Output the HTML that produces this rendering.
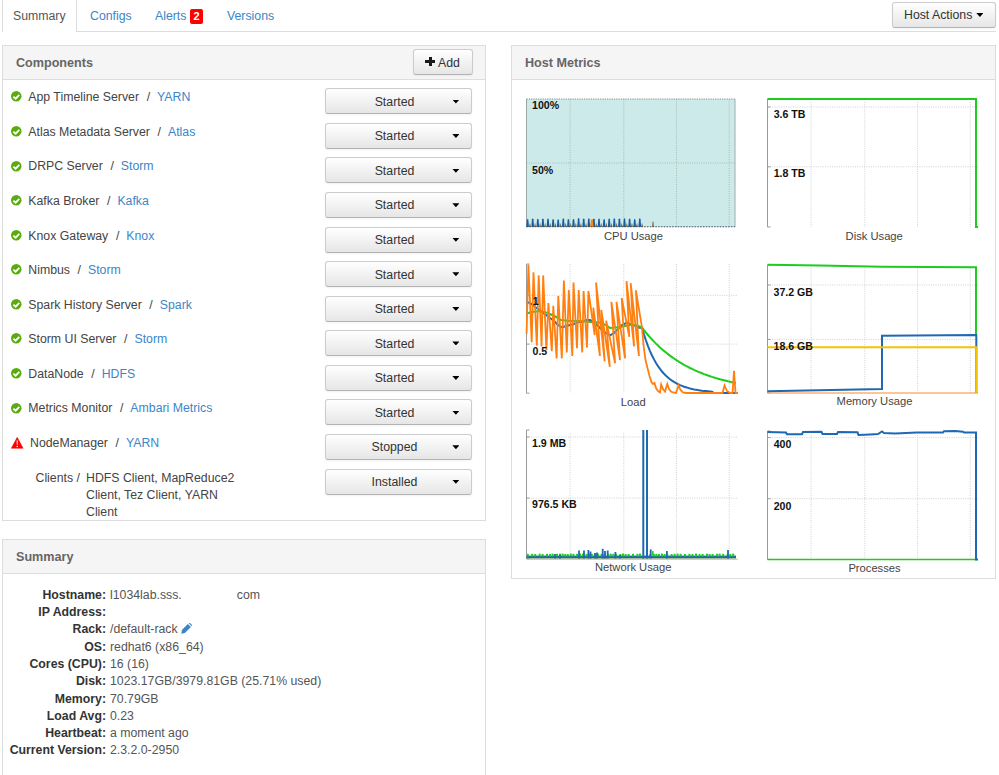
<!DOCTYPE html>
<html><head><meta charset="utf-8">
<style>
html,body{margin:0;padding:0;background:#fff;width:999px;height:775px;overflow:hidden;position:relative;font-family:"Liberation Sans",sans-serif;font-size:12.3px;color:#333}
.a{position:absolute;white-space:nowrap}
.lnk{color:#3a86c8}
.tabtxt{font-size:12.3px;line-height:14px}
.panel{position:absolute;border:1px solid #ddd;background:#fff;box-sizing:border-box}
.ph{position:absolute;left:0;right:0;top:0;height:33px;background:#f5f5f5;border-bottom:1px solid #ddd}
.pht{position:absolute;font-weight:bold;color:#666;font-size:12.6px;line-height:14px}
.btn{position:absolute;box-sizing:border-box;border:1px solid #ccc;border-bottom-color:#b3b3b3;border-radius:3px;background:linear-gradient(#fff,#e6e6e6);box-shadow:0 1px 2px rgba(0,0,0,.05)}
.caret{position:absolute;width:7.2px;height:4px;background:#000;clip-path:polygon(0 0,100% 0,50% 100%);margin-left:0.3px}
.comp{position:absolute;font-size:12.3px;line-height:14px;color:#444}
.sl{position:absolute;text-align:right;font-weight:bold;width:104px;left:2px;font-size:12.3px;line-height:14px;color:#333}
.sv{position:absolute;left:110px;font-size:12.3px;line-height:14px;color:#555}
</style></head><body>

<!-- Tabs -->
<div class="a" style="left:2px;top:0;width:1px;height:32px;background:#ddd"></div>
<div class="a" style="left:76px;top:0;width:1px;height:32px;background:#ddd"></div>
<div class="a" style="left:76px;top:31px;width:920px;height:1px;background:#ddd"></div>
<div class="a tabtxt" style="left:13px;top:9px;color:#555">Summary</div>
<div class="a tabtxt lnk" style="left:90px;top:9px">Configs</div>
<div class="a tabtxt lnk" style="left:155px;top:9px">Alerts</div>
<div class="a" style="left:190px;top:9px;width:13px;height:15px;background:#f00;border-radius:2px;color:#fff;font-weight:bold;font-size:11px;line-height:15px;text-align:center">2</div>
<div class="a tabtxt lnk" style="left:227px;top:9px">Versions</div>

<!-- Host Actions -->
<div class="btn" style="left:892px;top:2px;width:104px;height:26px"></div>
<div class="a tabtxt" style="left:904px;top:8px">Host Actions</div>
<div class="caret" style="left:976px;top:13px"></div>

<!-- Components panel -->
<div class="panel" style="left:2px;top:45px;width:484px;height:476px">
  <div class="ph"></div>
</div>
<div class="a pht" style="left:16px;top:55.6px">Components</div>
<div class="btn" style="left:413px;top:49px;width:60px;height:26px"></div>
<div class="a" style="left:425.2px;top:60.2px;width:9.6px;height:2.7px;background:#1a1a1a"></div><div class="a" style="left:428.5px;top:56.9px;width:3px;height:9.3px;background:#1a1a1a"></div>
<div class="a tabtxt" style="left:438px;top:55.8px">Add</div>

<svg class="a" style="left:10.65px;top:91.45px" width="11" height="11" viewBox="0 0 11 11"><circle cx="5.25" cy="5.25" r="5.25" fill="#5aac0c"/><path d="M2.4 5.6 L4.6 7.7 L8.3 3.9" stroke="#fff" stroke-width="1.8" fill="none" stroke-linecap="butt"/></svg>
<div class="a comp" style="left:28.3px;top:90.30px">App Timeline Server<span style="padding:0 7px 0 7.6px">/</span><span class="lnk">YARN</span></div>
<div class="btn" style="left:325px;top:88.30px;width:147px;height:26px"></div>
<div class="a tabtxt" style="left:325px;width:139px;text-align:center;top:94.70px">Started</div>
<div class="caret" style="left:452px;top:99.50px"></div>
<svg class="a" style="left:10.65px;top:126.02px" width="11" height="11" viewBox="0 0 11 11"><circle cx="5.25" cy="5.25" r="5.25" fill="#5aac0c"/><path d="M2.4 5.6 L4.6 7.7 L8.3 3.9" stroke="#fff" stroke-width="1.8" fill="none" stroke-linecap="butt"/></svg>
<div class="a comp" style="left:28.3px;top:124.87px">Atlas Metadata Server<span style="padding:0 7px 0 7.6px">/</span><span class="lnk">Atlas</span></div>
<div class="btn" style="left:325px;top:122.87px;width:147px;height:26px"></div>
<div class="a tabtxt" style="left:325px;width:139px;text-align:center;top:129.27px">Started</div>
<div class="caret" style="left:452px;top:134.07px"></div>
<svg class="a" style="left:10.65px;top:160.59px" width="11" height="11" viewBox="0 0 11 11"><circle cx="5.25" cy="5.25" r="5.25" fill="#5aac0c"/><path d="M2.4 5.6 L4.6 7.7 L8.3 3.9" stroke="#fff" stroke-width="1.8" fill="none" stroke-linecap="butt"/></svg>
<div class="a comp" style="left:28.3px;top:159.44px">DRPC Server<span style="padding:0 7px 0 7.6px">/</span><span class="lnk">Storm</span></div>
<div class="btn" style="left:325px;top:157.44px;width:147px;height:26px"></div>
<div class="a tabtxt" style="left:325px;width:139px;text-align:center;top:163.84px">Started</div>
<div class="caret" style="left:452px;top:168.64px"></div>
<svg class="a" style="left:10.65px;top:195.16px" width="11" height="11" viewBox="0 0 11 11"><circle cx="5.25" cy="5.25" r="5.25" fill="#5aac0c"/><path d="M2.4 5.6 L4.6 7.7 L8.3 3.9" stroke="#fff" stroke-width="1.8" fill="none" stroke-linecap="butt"/></svg>
<div class="a comp" style="left:28.3px;top:194.01px">Kafka Broker<span style="padding:0 7px 0 7.6px">/</span><span class="lnk">Kafka</span></div>
<div class="btn" style="left:325px;top:192.01px;width:147px;height:26px"></div>
<div class="a tabtxt" style="left:325px;width:139px;text-align:center;top:198.41px">Started</div>
<div class="caret" style="left:452px;top:203.21px"></div>
<svg class="a" style="left:10.65px;top:229.73px" width="11" height="11" viewBox="0 0 11 11"><circle cx="5.25" cy="5.25" r="5.25" fill="#5aac0c"/><path d="M2.4 5.6 L4.6 7.7 L8.3 3.9" stroke="#fff" stroke-width="1.8" fill="none" stroke-linecap="butt"/></svg>
<div class="a comp" style="left:28.3px;top:228.58px">Knox Gateway<span style="padding:0 7px 0 7.6px">/</span><span class="lnk">Knox</span></div>
<div class="btn" style="left:325px;top:226.58px;width:147px;height:26px"></div>
<div class="a tabtxt" style="left:325px;width:139px;text-align:center;top:232.98px">Started</div>
<div class="caret" style="left:452px;top:237.78px"></div>
<svg class="a" style="left:10.65px;top:264.3px" width="11" height="11" viewBox="0 0 11 11"><circle cx="5.25" cy="5.25" r="5.25" fill="#5aac0c"/><path d="M2.4 5.6 L4.6 7.7 L8.3 3.9" stroke="#fff" stroke-width="1.8" fill="none" stroke-linecap="butt"/></svg>
<div class="a comp" style="left:28.3px;top:263.15px">Nimbus<span style="padding:0 7px 0 7.6px">/</span><span class="lnk">Storm</span></div>
<div class="btn" style="left:325px;top:261.15px;width:147px;height:26px"></div>
<div class="a tabtxt" style="left:325px;width:139px;text-align:center;top:267.55px">Started</div>
<div class="caret" style="left:452px;top:272.35px"></div>
<svg class="a" style="left:10.65px;top:298.87px" width="11" height="11" viewBox="0 0 11 11"><circle cx="5.25" cy="5.25" r="5.25" fill="#5aac0c"/><path d="M2.4 5.6 L4.6 7.7 L8.3 3.9" stroke="#fff" stroke-width="1.8" fill="none" stroke-linecap="butt"/></svg>
<div class="a comp" style="left:28.3px;top:297.72px">Spark History Server<span style="padding:0 7px 0 7.6px">/</span><span class="lnk">Spark</span></div>
<div class="btn" style="left:325px;top:295.72px;width:147px;height:26px"></div>
<div class="a tabtxt" style="left:325px;width:139px;text-align:center;top:302.12px">Started</div>
<div class="caret" style="left:452px;top:306.92px"></div>
<svg class="a" style="left:10.65px;top:333.44px" width="11" height="11" viewBox="0 0 11 11"><circle cx="5.25" cy="5.25" r="5.25" fill="#5aac0c"/><path d="M2.4 5.6 L4.6 7.7 L8.3 3.9" stroke="#fff" stroke-width="1.8" fill="none" stroke-linecap="butt"/></svg>
<div class="a comp" style="left:28.3px;top:332.29px">Storm UI Server<span style="padding:0 7px 0 7.6px">/</span><span class="lnk">Storm</span></div>
<div class="btn" style="left:325px;top:330.29px;width:147px;height:26px"></div>
<div class="a tabtxt" style="left:325px;width:139px;text-align:center;top:336.69px">Started</div>
<div class="caret" style="left:452px;top:341.49px"></div>
<svg class="a" style="left:10.65px;top:368.01px" width="11" height="11" viewBox="0 0 11 11"><circle cx="5.25" cy="5.25" r="5.25" fill="#5aac0c"/><path d="M2.4 5.6 L4.6 7.7 L8.3 3.9" stroke="#fff" stroke-width="1.8" fill="none" stroke-linecap="butt"/></svg>
<div class="a comp" style="left:28.3px;top:366.86px">DataNode<span style="padding:0 7px 0 7.6px">/</span><span class="lnk">HDFS</span></div>
<div class="btn" style="left:325px;top:364.86px;width:147px;height:26px"></div>
<div class="a tabtxt" style="left:325px;width:139px;text-align:center;top:371.26px">Started</div>
<div class="caret" style="left:452px;top:376.06px"></div>
<svg class="a" style="left:10.65px;top:402.58px" width="11" height="11" viewBox="0 0 11 11"><circle cx="5.25" cy="5.25" r="5.25" fill="#5aac0c"/><path d="M2.4 5.6 L4.6 7.7 L8.3 3.9" stroke="#fff" stroke-width="1.8" fill="none" stroke-linecap="butt"/></svg>
<div class="a comp" style="left:28.3px;top:401.43px">Metrics Monitor<span style="padding:0 7px 0 7.6px">/</span><span class="lnk">Ambari Metrics</span></div>
<div class="btn" style="left:325px;top:399.43px;width:147px;height:26px"></div>
<div class="a tabtxt" style="left:325px;width:139px;text-align:center;top:405.83px">Started</div>
<div class="caret" style="left:452px;top:410.63px"></div>
<svg class="a" style="left:10.6px;top:436.5px" width="13" height="12" viewBox="0 0 13 12"><path d="M6.2 0.3 L12.1 11.3 L0.3 11.3 Z" fill="#f00" stroke="#f00" stroke-width="0.5" stroke-linejoin="round"/><path d="M5.6 3.6 L6.8 3.6 L6.5 8.2 L5.9 8.2 Z" fill="#fff"/><rect x="5.6" y="9" width="1.2" height="1.1" fill="#fff"/></svg>
<div class="a comp" style="left:30px;top:436.00px">NodeManager<span style="padding:0 7px 0 7.6px">/</span><span class="lnk">YARN</span></div>
<div class="btn" style="left:325px;top:434.00px;width:147px;height:26px"></div>
<div class="a tabtxt" style="left:325px;width:139px;text-align:center;top:440.40px">Stopped</div>
<div class="caret" style="left:452px;top:445.20px"></div>
<div class="a comp" style="left:35.5px;top:470.57px">Clients /</div>
<div class="a comp" style="left:86px;top:471.27px;line-height:17.3px;white-space:normal;width:160px;margin-top:-1.6px">HDFS Client, MapReduce2 Client, Tez Client, YARN Client</div>
<div class="btn" style="left:325px;top:468.57px;width:147px;height:26px"></div>
<div class="a tabtxt" style="left:325px;width:139px;text-align:center;top:474.97px">Installed</div>
<div class="caret" style="left:452px;top:479.77px"></div>

<!-- Summary panel -->
<div class="panel" style="left:2px;top:539px;width:484px;height:260px">
  <div class="ph"></div>
</div>
<div class="a pht" style="left:16px;top:549.7px">Summary</div>
<div class="a sl" style="top:587.70px">Hostname:</div>
<div class="a sv" style="top:587.70px">l1034lab.sss.<span style='display:inline-block;width:55px'></span>com</div>
<div class="a sl" style="top:605.00px">IP Address:</div>
<div class="a sl" style="top:622.30px">Rack:</div>
<div class="a sv" style="top:622.30px">/default-rack <svg style="vertical-align:-1px;margin-left:-0.5px" width="11" height="11" viewBox="0 0 11 11"><path d="M0.3 10.7 L0.9 7.1 L6.9 1.1 L9.9 4.1 L3.9 10.1 Z" fill="#3a86c8"/><path d="M7.7 0.3 L8.5 -0.5 L11.5 2.5 L10.7 3.3 Z" fill="#3a86c8"/></svg></div>
<div class="a sl" style="top:639.60px">OS:</div>
<div class="a sv" style="top:639.60px">redhat6 (x86_64)</div>
<div class="a sl" style="top:656.90px">Cores (CPU):</div>
<div class="a sv" style="top:656.90px">16 (16)</div>
<div class="a sl" style="top:674.20px">Disk:</div>
<div class="a sv" style="top:674.20px">1023.17GB/3979.81GB (25.71% used)</div>
<div class="a sl" style="top:691.50px">Memory:</div>
<div class="a sv" style="top:691.50px">70.79GB</div>
<div class="a sl" style="top:708.80px">Load Avg:</div>
<div class="a sv" style="top:708.80px">0.23</div>
<div class="a sl" style="top:726.10px">Heartbeat:</div>
<div class="a sv" style="top:726.10px">a moment ago</div>
<div class="a sl" style="top:743.40px">Current Version:</div>
<div class="a sv" style="top:743.40px">2.3.2.0-2950</div>

<!-- Host Metrics panel -->
<div class="panel" style="left:511px;top:45px;width:485px;height:534px">
  <div class="ph"></div>
</div>
<div class="a pht" style="left:525px;top:55.6px">Host Metrics</div>
<svg class="a" style="left:0;top:0" width="999" height="775" viewBox="0 0 999 775"><rect x="526.5" y="99" width="208.5" height="128" fill="#cdeaea"/>
<line x1="570.1" y1="99" x2="570.1" y2="227" stroke="#aab8b8" stroke-width="1" stroke-dasharray="1 1.3"/>
<line x1="623.8" y1="99" x2="623.8" y2="227" stroke="#aab8b8" stroke-width="1" stroke-dasharray="1 1.3"/>
<line x1="676.5" y1="99" x2="676.5" y2="227" stroke="#aab8b8" stroke-width="1" stroke-dasharray="1 1.3"/>
<line x1="729.2" y1="99" x2="729.2" y2="227" stroke="#aab8b8" stroke-width="1" stroke-dasharray="1 1.3"/>
<line x1="526.5" y1="163.0" x2="735" y2="163.0" stroke="#aab8b8" stroke-width="1" stroke-dasharray="1 1.3"/>
<line x1="526.5" y1="99" x2="735" y2="99" stroke="#8a9595" stroke-width="1" stroke-dasharray="1.3 1"/>
<line x1="735" y1="99" x2="735" y2="227" stroke="#a0abab" stroke-width="1"/>
<line x1="526.5" y1="99" x2="526.5" y2="227" stroke="#9aa5a5" stroke-width="1"/>
<path d="M526.25 227 L526.85 219.6 Q527.6 218.2 528.35 219.6 L528.95 227 Z" fill="#1b5e9e"/>
<path d="M528.8 227 L529.9 222.8 L531.0 227 Z" fill="#5e4c30" opacity="0.75"/>
<path d="M531.35 227 L531.95 219.2 Q532.7 217.8 533.45 219.2 L534.05 227 Z" fill="#1b5e9e"/>
<path d="M533.9 227 L535.0 222.8 L536.1 227 Z" fill="#5e4c30" opacity="0.75"/>
<path d="M536.45 227 L537.05 219.5 Q537.8 218.1 538.55 219.5 L539.15 227 Z" fill="#1b5e9e"/>
<path d="M539.0 227 L540.1 222.8 L541.2 227 Z" fill="#5e4c30" opacity="0.75"/>
<path d="M541.55 227 L542.15 219.2 Q542.9 217.8 543.65 219.2 L544.25 227 Z" fill="#1b5e9e"/>
<path d="M544.1 227 L545.2 222.8 L546.3 227 Z" fill="#5e4c30" opacity="0.75"/>
<path d="M546.65 227 L547.25 219.1 Q548.0 217.7 548.75 219.1 L549.35 227 Z" fill="#1b5e9e"/>
<path d="M549.2 227 L550.3 222.8 L551.4 227 Z" fill="#5e4c30" opacity="0.75"/>
<path d="M551.75 227 L552.35 219.8 Q553.1 218.4 553.85 219.8 L554.45 227 Z" fill="#1b5e9e"/>
<path d="M554.3 227 L555.4 222.8 L556.5 227 Z" fill="#5e4c30" opacity="0.75"/>
<path d="M556.85 227 L557.45 219.9 Q558.2 218.5 558.95 219.9 L559.55 227 Z" fill="#1b5e9e"/>
<path d="M559.4 227 L560.5 222.8 L561.6 227 Z" fill="#5e4c30" opacity="0.75"/>
<path d="M561.95 227 L562.55 218.9 Q563.3 217.5 564.05 218.9 L564.65 227 Z" fill="#1b5e9e"/>
<path d="M564.5 227 L565.6 222.8 L566.7 227 Z" fill="#5e4c30" opacity="0.75"/>
<path d="M567.05 227 L567.65 219.6 Q568.4 218.2 569.15 219.6 L569.75 227 Z" fill="#1b5e9e"/>
<path d="M569.6 227 L570.7 222.8 L571.8 227 Z" fill="#5e4c30" opacity="0.75"/>
<path d="M572.15 227 L572.75 219.6 Q573.5 218.2 574.25 219.6 L574.85 227 Z" fill="#1b5e9e"/>
<path d="M574.7 227 L575.8 222.8 L576.9 227 Z" fill="#5e4c30" opacity="0.75"/>
<path d="M577.25 227 L577.85 218.7 Q578.6 217.3 579.35 218.7 L579.95 227 Z" fill="#1b5e9e"/>
<path d="M579.8 227 L580.9 222.8 L582.0 227 Z" fill="#5e4c30" opacity="0.75"/>
<path d="M582.35 227 L582.95 219.3 Q583.7 217.9 584.45 219.3 L585.05 227 Z" fill="#1b5e9e"/>
<path d="M584.9 227 L586.0 222.8 L587.1 227 Z" fill="#5e4c30" opacity="0.75"/>
<path d="M587.45 227 L588.05 218.9 Q588.8 217.5 589.55 218.9 L590.15 227 Z" fill="#1b5e9e"/>
<path d="M590.0 227 L591.1 222.8 L592.2 227 Z" fill="#5e4c30" opacity="0.75"/>
<path d="M592.55 227 L593.15 219.3 Q593.9 217.9 594.65 219.3 L595.25 227 Z" fill="#1b5e9e"/>
<path d="M595.1 227 L596.2 222.8 L597.3 227 Z" fill="#5e4c30" opacity="0.75"/>
<path d="M597.65 227 L598.25 219.1 Q599.0 217.7 599.75 219.1 L600.35 227 Z" fill="#1b5e9e"/>
<path d="M600.2 227 L601.3 222.8 L602.4 227 Z" fill="#5e4c30" opacity="0.75"/>
<path d="M602.75 227 L603.35 219.7 Q604.1 218.3 604.85 219.7 L605.45 227 Z" fill="#1b5e9e"/>
<path d="M605.3 227 L606.4 222.8 L607.5 227 Z" fill="#5e4c30" opacity="0.75"/>
<path d="M607.85 227 L608.45 219.1 Q609.2 217.7 609.95 219.1 L610.55 227 Z" fill="#1b5e9e"/>
<path d="M610.4 227 L611.5 222.8 L612.6 227 Z" fill="#5e4c30" opacity="0.75"/>
<path d="M612.95 227 L613.55 218.9 Q614.3 217.5 615.05 218.9 L615.65 227 Z" fill="#1b5e9e"/>
<path d="M615.5 227 L616.6 222.8 L617.7 227 Z" fill="#5e4c30" opacity="0.75"/>
<path d="M618.05 227 L618.65 219.3 Q619.4 217.9 620.15 219.3 L620.75 227 Z" fill="#1b5e9e"/>
<path d="M620.6 227 L621.7 222.8 L622.8 227 Z" fill="#5e4c30" opacity="0.75"/>
<path d="M623.15 227 L623.75 219.0 Q624.5 217.6 625.25 219.0 L625.85 227 Z" fill="#1b5e9e"/>
<path d="M625.7 227 L626.8 222.8 L627.9 227 Z" fill="#5e4c30" opacity="0.75"/>
<path d="M628.25 227 L628.85 219.1 Q629.6 217.7 630.35 219.1 L630.95 227 Z" fill="#1b5e9e"/>
<path d="M630.8 227 L631.9 222.8 L633.0 227 Z" fill="#5e4c30" opacity="0.75"/>
<path d="M633.35 227 L633.95 219.8 Q634.7 218.4 635.45 219.8 L636.05 227 Z" fill="#1b5e9e"/>
<path d="M635.9 227 L637.0 222.8 L638.1 227 Z" fill="#5e4c30" opacity="0.75"/>
<path d="M638.45 227 L639.05 219.0 Q639.8 217.6 640.55 219.0 L641.15 227 Z" fill="#1b5e9e"/>
<path d="M641.0 227 L642.1 222.8 L643.2 227 Z" fill="#5e4c30" opacity="0.75"/>
<path d="M590.3 227 L590.9 219.5 L592.9 219.5 L593.5 227 Z" fill="#ff8616"/>
<path d="M652.2 227 L652.6 221.5 L653.4 221.5 L653.8 227 Z" fill="#7a5a30"/>
<line x1="526.5" y1="226.7" x2="735" y2="226.7" stroke="#4a5560" stroke-width="1.1" stroke-dasharray="1.6 1.2"/>
<text x="532" y="109" font-family="Liberation Sans" font-weight="bold" font-size="10.6" fill="#111">100%</text>
<text x="532" y="173.5" font-family="Liberation Sans" font-weight="bold" font-size="10.6" fill="#111">50%</text>
<text x="633.5" y="239" text-anchor="middle" font-family="Liberation Sans" font-size="11.2" fill="#444" dy="0.7">CPU Usage</text>
<line x1="811.1" y1="102" x2="811.1" y2="227" stroke="#d0d0d0" stroke-width="1" stroke-dasharray="1 1.3"/>
<line x1="864.8" y1="102" x2="864.8" y2="227" stroke="#d0d0d0" stroke-width="1" stroke-dasharray="1 1.3"/>
<line x1="917.5" y1="102" x2="917.5" y2="227" stroke="#d0d0d0" stroke-width="1" stroke-dasharray="1 1.3"/>
<line x1="970.2" y1="102" x2="970.2" y2="227" stroke="#d0d0d0" stroke-width="1" stroke-dasharray="1 1.3"/>
<line x1="767.5" y1="107.0" x2="978" y2="107.0" stroke="#d0d0d0" stroke-width="1" stroke-dasharray="1 1.3"/>
<line x1="767.5" y1="166.8" x2="978" y2="166.8" stroke="#d0d0d0" stroke-width="1" stroke-dasharray="1 1.3"/>
<line x1="767.5" y1="99" x2="767.5" y2="227" stroke="#9a9a9a" stroke-width="1"/>
<line x1="767.5" y1="99.0" x2="770.5" y2="99.0" stroke="#9a9a9a" stroke-width="1"/>
<line x1="767.5" y1="107.0" x2="770.5" y2="107.0" stroke="#9a9a9a" stroke-width="1"/>
<line x1="767.5" y1="166.8" x2="770.5" y2="166.8" stroke="#9a9a9a" stroke-width="1"/>
<line x1="767.5" y1="227.0" x2="770.5" y2="227.0" stroke="#9a9a9a" stroke-width="1"/>
<polyline points="767.5,99 976,99 976,227 978,227" fill="none" stroke="#1ecc1e" stroke-width="2"/>
<text x="773.7" y="117.7" font-family="Liberation Sans" font-weight="bold" font-size="10.6" fill="#111">3.6 TB</text>
<text x="773.7" y="177" font-family="Liberation Sans" font-weight="bold" font-size="10.6" fill="#111">1.8 TB</text>
<text x="874.2" y="239.1" text-anchor="middle" font-family="Liberation Sans" font-size="11.2" fill="#444" dy="0.7">Disk Usage</text>
<line x1="570.1" y1="264" x2="570.1" y2="393.2" stroke="#d0d0d0" stroke-width="1" stroke-dasharray="1 1.3"/>
<line x1="623.8" y1="264" x2="623.8" y2="393.2" stroke="#d0d0d0" stroke-width="1" stroke-dasharray="1 1.3"/>
<line x1="676.5" y1="264" x2="676.5" y2="393.2" stroke="#d0d0d0" stroke-width="1" stroke-dasharray="1 1.3"/>
<line x1="729.2" y1="264" x2="729.2" y2="393.2" stroke="#d0d0d0" stroke-width="1" stroke-dasharray="1 1.3"/>
<line x1="526.5" y1="295.3" x2="738" y2="295.3" stroke="#d0d0d0" stroke-width="1" stroke-dasharray="1 1.3"/>
<line x1="526.5" y1="344.1" x2="738" y2="344.1" stroke="#d0d0d0" stroke-width="1" stroke-dasharray="1 1.3"/>
<line x1="526.5" y1="264" x2="526.5" y2="393.2" stroke="#9a9a9a" stroke-width="1"/>
<line x1="526.5" y1="264.0" x2="529.5" y2="264.0" stroke="#9a9a9a" stroke-width="1"/>
<line x1="526.5" y1="295.3" x2="529.5" y2="295.3" stroke="#9a9a9a" stroke-width="1"/>
<line x1="526.5" y1="344.1" x2="529.5" y2="344.1" stroke="#9a9a9a" stroke-width="1"/>
<line x1="526.5" y1="393.2" x2="529.5" y2="393.2" stroke="#9a9a9a" stroke-width="1"/>
<polyline points="526.5,302.0 530.0,303.0 534.0,306.0 538.0,309.0 542.0,312.0 546.0,315.0 550.0,318.0 554.0,321.0 558.0,325.0 562.0,327.5 566.0,326.0 570.0,325.0 574.0,324.0 578.0,322.0 582.0,322.0 586.0,320.0 590.0,320.0 594.0,322.0 598.0,326.0 602.0,330.0 606.0,333.0 610.0,335.4 614.0,333.0 618.0,329.0 622.0,325.0 627.0,322.5 632.0,325.0 636.0,326.0 639.0,327.7 642.0,327.6 644.0,334.5 646.0,340.6 648.0,346.1 650.0,351.1 652.0,355.5 654.0,359.4 656.0,363.0 658.0,366.1 660.0,368.9 662.0,371.5 664.0,373.7 666.0,375.8 668.0,377.6 670.0,379.2 672.0,380.6 674.0,381.9 676.0,383.1 678.0,384.1 680.0,385.1 682.0,385.9 684.0,386.7 686.0,387.3 688.0,387.9 690.0,388.5 692.0,388.9 694.0,389.4 696.0,389.7 698.0,390.1 700.0,390.4 702.0,390.7 704.0,390.9 706.0,391.1 708.0,391.3 710.0,391.5 712.0,391.7 714.0,393.0 738.0,393.0" fill="none" stroke="#1f69b4" stroke-width="2"/>
<polyline points="526.5,313.5 532.0,312.0 540.0,311.0 548.0,313.0 556.0,317.0 561.0,320.0 570.0,321.0 580.0,321.0 590.0,322.0 600.0,322.5 606.0,325.0 610.0,328.0 620.0,327.0 630.0,325.0 636.0,325.0 642.0,327.6 644.0,330.2 646.0,332.6 648.0,335.0 650.0,337.3 652.0,339.5 654.0,341.6 656.0,343.6 658.0,345.5 660.0,347.4 662.0,349.2 664.0,350.9 666.0,352.5 668.0,354.1 670.0,355.6 672.0,357.1 674.0,358.5 676.0,359.9 678.0,361.2 680.0,362.4 682.0,363.6 684.0,364.8 686.0,365.9 688.0,366.9 690.0,368.0 692.0,368.9 694.0,369.9 696.0,370.8 698.0,371.7 700.0,372.5 702.0,373.3 704.0,374.1 706.0,374.8 708.0,375.5 710.0,376.2 712.0,376.9 714.0,377.5 716.0,378.1 718.0,378.7 720.0,379.3 722.0,379.8 724.0,380.3 726.0,380.8 728.0,381.3 730.0,381.7 732.0,382.2 734.0,382.6 736.0,383.0" fill="none" stroke="#1ecc1e" stroke-width="2"/>
<polyline points="526.6,333.8 528.4,264.5 531.7,342.2 533.5,272.2 536.8,345.8 538.7,275.4 541.6,346.4 543.2,275.4 546.4,350.0 548.4,303.0 551.8,351.2 553.3,305.7 556.6,358.4 558.3,296.0 561.8,358.4 563.9,280.6 566.8,352.4 568.8,290.0 572.3,356.0 573.5,282.5 577.0,348.2 578.7,290.0 582.2,352.4 583.6,291.0 587.0,347.6 588.4,291.0 594.7,335.0 593.3,307.7 599.9,356.0 596.1,282.5 604.7,361.4 601.3,310.0 609.8,366.8 606.2,320.6 615.1,363.2 611.4,301.9 620.0,360.2 616.5,301.9 625.1,358.4 621.7,298.0 629.3,336.8 626.5,281.2 634.1,346.4 630.7,283.2 638.9,356.0 635.9,290.3 642.0,327.6 643.5,345.0 645.5,360.0 647.5,368.0 649.5,376.0 651.5,382.0 653.0,384.0 654.5,383.0 656.0,388.0 658.0,391.0 660.0,392.5 661.2,384.5 663.0,389.0 665.0,391.5 667.3,384.0 669.0,389.0 671.0,391.5 673.0,392.5 676.0,393.0 678.6,385.4 680.5,390.0 683.0,392.5 686.0,393.0 722.5,393.0 724.5,385.4 727.0,391.0 730.0,393.0 732.5,393.0 734.0,370.7 735.5,393.0 738.0,393.0" fill="none" stroke="#ff8010" stroke-width="1.8" stroke-linejoin="miter"/>
<text x="532.8" y="304.6" font-family="Liberation Sans" font-weight="bold" font-size="10.6" fill="#111">1</text>
<text x="532.5" y="354.5" font-family="Liberation Sans" font-weight="bold" font-size="10.6" fill="#111">0.5</text>
<text x="633.2" y="405.1" text-anchor="middle" font-family="Liberation Sans" font-size="11.2" fill="#444" dy="0.7">Load</text>
<line x1="811.1" y1="268" x2="811.1" y2="393.1" stroke="#d0d0d0" stroke-width="1" stroke-dasharray="1 1.3"/>
<line x1="864.8" y1="268" x2="864.8" y2="393.1" stroke="#d0d0d0" stroke-width="1" stroke-dasharray="1 1.3"/>
<line x1="917.5" y1="268" x2="917.5" y2="393.1" stroke="#d0d0d0" stroke-width="1" stroke-dasharray="1 1.3"/>
<line x1="970.2" y1="268" x2="970.2" y2="393.1" stroke="#d0d0d0" stroke-width="1" stroke-dasharray="1 1.3"/>
<line x1="767.5" y1="285.0" x2="978" y2="285.0" stroke="#d0d0d0" stroke-width="1" stroke-dasharray="1 1.3"/>
<line x1="767.5" y1="339.4" x2="978" y2="339.4" stroke="#d0d0d0" stroke-width="1" stroke-dasharray="1 1.3"/>
<line x1="767.5" y1="265" x2="767.5" y2="393.1" stroke="#9a9a9a" stroke-width="1"/>
<line x1="767.5" y1="265.0" x2="770.5" y2="265.0" stroke="#9a9a9a" stroke-width="1"/>
<line x1="767.5" y1="285.0" x2="770.5" y2="285.0" stroke="#9a9a9a" stroke-width="1"/>
<line x1="767.5" y1="339.4" x2="770.5" y2="339.4" stroke="#9a9a9a" stroke-width="1"/>
<line x1="767.5" y1="393.1" x2="770.5" y2="393.1" stroke="#9a9a9a" stroke-width="1"/>
<polyline points="767.5,264.7 820,265.6 882,266.8 976,267.3 976,336" fill="none" stroke="#1ecc1e" stroke-width="2"/>
<line x1="767.5" y1="393.1" x2="978" y2="393.1" stroke="#ffb070" stroke-width="1.5"/>
<polyline points="767.5,391.2 882,389 882,335.7 976.3,335 976.3,393" fill="none" stroke="#1f69b4" stroke-width="2"/>
<polyline points="767.5,347.2 976.3,347.2 976.3,393" fill="none" stroke="#f5c400" stroke-width="2"/>
<text x="773.5" y="296.2" font-family="Liberation Sans" font-weight="bold" font-size="10.6" fill="#111">37.2 GB</text>
<text x="773.5" y="349.8" font-family="Liberation Sans" font-weight="bold" font-size="10.6" fill="#111">18.6 GB</text>
<text x="874.5" y="404.6" text-anchor="middle" font-family="Liberation Sans" font-size="11.2" fill="#444" dy="0.7">Memory Usage</text>
<line x1="570.1" y1="433" x2="570.1" y2="558.8" stroke="#d0d0d0" stroke-width="1" stroke-dasharray="1 1.3"/>
<line x1="623.8" y1="433" x2="623.8" y2="558.8" stroke="#d0d0d0" stroke-width="1" stroke-dasharray="1 1.3"/>
<line x1="676.5" y1="433" x2="676.5" y2="558.8" stroke="#d0d0d0" stroke-width="1" stroke-dasharray="1 1.3"/>
<line x1="729.2" y1="433" x2="729.2" y2="558.8" stroke="#d0d0d0" stroke-width="1" stroke-dasharray="1 1.3"/>
<line x1="526.5" y1="437.0" x2="738" y2="437.0" stroke="#d0d0d0" stroke-width="1" stroke-dasharray="1 1.3"/>
<line x1="526.5" y1="498.1" x2="738" y2="498.1" stroke="#d0d0d0" stroke-width="1" stroke-dasharray="1 1.3"/>
<line x1="526.5" y1="430" x2="526.5" y2="558.8" stroke="#9a9a9a" stroke-width="1"/>
<line x1="526.5" y1="430.0" x2="529.5" y2="430.0" stroke="#9a9a9a" stroke-width="1"/>
<line x1="526.5" y1="437.0" x2="529.5" y2="437.0" stroke="#9a9a9a" stroke-width="1"/>
<line x1="526.5" y1="498.1" x2="529.5" y2="498.1" stroke="#9a9a9a" stroke-width="1"/>
<line x1="526.5" y1="558.8" x2="529.5" y2="558.8" stroke="#9a9a9a" stroke-width="1"/>
<text x="532" y="447" font-family="Liberation Sans" font-weight="bold" font-size="10.6" fill="#111">1.9 MB</text>
<text x="532" y="508.2" font-family="Liberation Sans" font-weight="bold" font-size="10.6" fill="#111">976.5 KB</text>
<rect x="526.5" y="555.6" width="209.5" height="2.9" fill="#1f69b4"/>
<rect x="526.8" y="553.8" width="2.0" height="2.6" fill="#1ecc1e"/>
<rect x="531.2" y="553.8" width="2.0" height="2.6" fill="#1ecc1e"/>
<rect x="534.2" y="554.0" width="2.0" height="2.4" fill="#1ecc1e"/>
<rect x="538.6" y="553.6" width="2.0" height="2.8" fill="#1ecc1e"/>
<rect x="541.6" y="554.0" width="2.0" height="2.4" fill="#1ecc1e"/>
<rect x="546.0" y="553.8" width="2.0" height="2.6" fill="#1ecc1e"/>
<rect x="549.0" y="554.0" width="2.0" height="2.4" fill="#1ecc1e"/>
<rect x="551.6" y="553.6" width="2.0" height="2.8" fill="#1ecc1e"/>
<rect x="556.0" y="553.8" width="2.0" height="2.6" fill="#1ecc1e"/>
<rect x="559.0" y="553.6" width="2.0" height="2.8" fill="#1ecc1e"/>
<rect x="561.6" y="553.6" width="2.0" height="2.8" fill="#1ecc1e"/>
<rect x="564.2" y="554.0" width="2.0" height="2.4" fill="#1ecc1e"/>
<rect x="566.8" y="554.0" width="2.0" height="2.4" fill="#1ecc1e"/>
<rect x="569.8" y="553.6" width="2.0" height="2.8" fill="#1ecc1e"/>
<rect x="572.4" y="553.8" width="2.0" height="2.6" fill="#1ecc1e"/>
<rect x="576.0" y="553.8" width="2.0" height="2.6" fill="#1ecc1e"/>
<rect x="579.0" y="553.6" width="2.0" height="2.8" fill="#1ecc1e"/>
<rect x="582.0" y="553.6" width="2.0" height="2.8" fill="#1ecc1e"/>
<rect x="585.6" y="553.8" width="2.0" height="2.6" fill="#1ecc1e"/>
<rect x="588.2" y="553.6" width="2.0" height="2.8" fill="#1ecc1e"/>
<rect x="590.8" y="553.8" width="2.0" height="2.6" fill="#1ecc1e"/>
<rect x="594.4" y="553.8" width="2.0" height="2.6" fill="#1ecc1e"/>
<rect x="597.0" y="553.6" width="2.0" height="2.8" fill="#1ecc1e"/>
<rect x="600.6" y="553.8" width="2.0" height="2.6" fill="#1ecc1e"/>
<rect x="603.6" y="553.6" width="2.0" height="2.8" fill="#1ecc1e"/>
<rect x="607.2" y="554.0" width="2.0" height="2.4" fill="#1ecc1e"/>
<rect x="609.8" y="553.6" width="2.0" height="2.8" fill="#1ecc1e"/>
<rect x="612.4" y="553.8" width="2.0" height="2.6" fill="#1ecc1e"/>
<rect x="615.0" y="553.8" width="2.0" height="2.6" fill="#1ecc1e"/>
<rect x="619.4" y="554.0" width="2.0" height="2.4" fill="#1ecc1e"/>
<rect x="622.0" y="553.6" width="2.0" height="2.8" fill="#1ecc1e"/>
<rect x="624.6" y="554.0" width="2.0" height="2.4" fill="#1ecc1e"/>
<rect x="627.6" y="554.0" width="2.0" height="2.4" fill="#1ecc1e"/>
<rect x="632.0" y="553.8" width="2.0" height="2.6" fill="#1ecc1e"/>
<rect x="636.4" y="553.8" width="2.0" height="2.6" fill="#1ecc1e"/>
<rect x="639.0" y="553.6" width="2.0" height="2.8" fill="#1ecc1e"/>
<rect x="649.2" y="554.0" width="2.0" height="2.4" fill="#1ecc1e"/>
<rect x="652.8" y="553.8" width="2.0" height="2.6" fill="#1ecc1e"/>
<rect x="655.4" y="553.8" width="2.0" height="2.6" fill="#1ecc1e"/>
<rect x="658.0" y="554.0" width="2.0" height="2.4" fill="#1ecc1e"/>
<rect x="661.0" y="553.6" width="2.0" height="2.8" fill="#1ecc1e"/>
<rect x="663.6" y="554.0" width="2.0" height="2.4" fill="#1ecc1e"/>
<rect x="666.2" y="553.8" width="2.0" height="2.6" fill="#1ecc1e"/>
<rect x="670.6" y="554.0" width="2.0" height="2.4" fill="#1ecc1e"/>
<rect x="673.6" y="553.8" width="2.0" height="2.6" fill="#1ecc1e"/>
<rect x="676.6" y="553.6" width="2.0" height="2.8" fill="#1ecc1e"/>
<rect x="679.6" y="553.8" width="2.0" height="2.6" fill="#1ecc1e"/>
<rect x="684.0" y="554.0" width="2.0" height="2.4" fill="#1ecc1e"/>
<rect x="688.4" y="553.8" width="2.0" height="2.6" fill="#1ecc1e"/>
<rect x="691.4" y="554.0" width="2.0" height="2.4" fill="#1ecc1e"/>
<rect x="695.0" y="553.6" width="2.0" height="2.8" fill="#1ecc1e"/>
<rect x="698.6" y="554.0" width="2.0" height="2.4" fill="#1ecc1e"/>
<rect x="701.6" y="554.0" width="2.0" height="2.4" fill="#1ecc1e"/>
<rect x="706.0" y="553.6" width="2.0" height="2.8" fill="#1ecc1e"/>
<rect x="708.6" y="554.0" width="2.0" height="2.4" fill="#1ecc1e"/>
<rect x="711.6" y="554.0" width="2.0" height="2.4" fill="#1ecc1e"/>
<rect x="716.0" y="553.8" width="2.0" height="2.6" fill="#1ecc1e"/>
<rect x="718.6" y="553.6" width="2.0" height="2.8" fill="#1ecc1e"/>
<rect x="722.2" y="553.8" width="2.0" height="2.6" fill="#1ecc1e"/>
<rect x="726.6" y="554.0" width="2.0" height="2.4" fill="#1ecc1e"/>
<rect x="729.2" y="554.0" width="2.0" height="2.4" fill="#1ecc1e"/>
<rect x="732.2" y="553.6" width="2.0" height="2.8" fill="#1ecc1e"/>
<rect x="578.1" y="550.5" width="1.8" height="8.3" fill="#1f69b4"/>
<rect x="583.1" y="550.5" width="1.8" height="8.3" fill="#1f69b4"/>
<rect x="587.5" y="550.0" width="1.8" height="8.8" fill="#1f69b4"/>
<rect x="589.6" y="551.5" width="1.8" height="7.3" fill="#1f69b4"/>
<rect x="594.1" y="553.0" width="1.8" height="5.8" fill="#1f69b4"/>
<rect x="601.8" y="548.8" width="1.8" height="10.0" fill="#1f69b4"/>
<rect x="604.1" y="551.0" width="1.8" height="7.8" fill="#1f69b4"/>
<rect x="606.8" y="550.5" width="1.8" height="8.3" fill="#1f69b4"/>
<rect x="614.5" y="552.0" width="1.8" height="6.8" fill="#1f69b4"/>
<rect x="649.8" y="549.4" width="1.8" height="9.4" fill="#1f69b4"/>
<rect x="666.0" y="551.0" width="1.8" height="7.8" fill="#1f69b4"/>
<rect x="727.1" y="550.0" width="1.8" height="8.8" fill="#1f69b4"/>
<rect x="554.1" y="554.0" width="1.8" height="4.8" fill="#1f69b4"/>
<rect x="559.1" y="555.0" width="1.8" height="3.8" fill="#1f69b4"/>
<rect x="619.1" y="555.0" width="1.8" height="3.8" fill="#1f69b4"/>
<rect x="596.1" y="552.5" width="1.8" height="6.3" fill="#1f69b4"/>
<rect x="652" y="551" width="1.6" height="4" fill="#1ecc1e"/>
<rect x="642.3" y="430" width="2" height="128.79999999999995" fill="#1f69b4"/>
<rect x="646" y="430" width="2" height="128.79999999999995" fill="#1f69b4"/>
<line x1="526.5" y1="559.3" x2="738" y2="559.3" stroke="#f5c400" stroke-width="1.1"/>
<text x="633.2" y="570.6" text-anchor="middle" font-family="Liberation Sans" font-size="11.2" fill="#444" dy="0.7">Network Usage</text>
<line x1="811.1" y1="435" x2="811.1" y2="559.4" stroke="#d0d0d0" stroke-width="1" stroke-dasharray="1 1.3"/>
<line x1="864.8" y1="435" x2="864.8" y2="559.4" stroke="#d0d0d0" stroke-width="1" stroke-dasharray="1 1.3"/>
<line x1="917.5" y1="435" x2="917.5" y2="559.4" stroke="#d0d0d0" stroke-width="1" stroke-dasharray="1 1.3"/>
<line x1="970.2" y1="435" x2="970.2" y2="559.4" stroke="#d0d0d0" stroke-width="1" stroke-dasharray="1 1.3"/>
<line x1="767.5" y1="437.6" x2="978" y2="437.6" stroke="#d0d0d0" stroke-width="1" stroke-dasharray="1 1.3"/>
<line x1="767.5" y1="498.7" x2="978" y2="498.7" stroke="#d0d0d0" stroke-width="1" stroke-dasharray="1 1.3"/>
<line x1="767.5" y1="431" x2="767.5" y2="559.4" stroke="#9a9a9a" stroke-width="1"/>
<line x1="767.5" y1="431.0" x2="770.5" y2="431.0" stroke="#9a9a9a" stroke-width="1"/>
<line x1="767.5" y1="437.6" x2="770.5" y2="437.6" stroke="#9a9a9a" stroke-width="1"/>
<line x1="767.5" y1="498.7" x2="770.5" y2="498.7" stroke="#9a9a9a" stroke-width="1"/>
<line x1="767.5" y1="559.4" x2="770.5" y2="559.4" stroke="#9a9a9a" stroke-width="1"/>
<text x="773.7" y="447.9" font-family="Liberation Sans" font-weight="bold" font-size="10.6" fill="#111">400</text>
<text x="773.7" y="509.6" font-family="Liberation Sans" font-weight="bold" font-size="10.6" fill="#111">200</text>
<line x1="767.5" y1="559.4" x2="977" y2="559.4" stroke="#1ecc1e" stroke-width="1.5"/>
<polyline points="767.5,432.0 786.0,432.6 787.0,434.2 802.0,434.2 803.0,432.0 821.5,431.8 822.5,434.0 837.0,434.0 838.0,432.0 857.5,432.3 858.5,435.0 870.0,434.4 878.0,434.0 882.0,431.5 884.0,433.0 895.0,433.6 917.0,432.4 943.0,432.6 944.0,431.2 955.0,431.0 963.0,431.8 964.0,432.6 976.0,432.4 976.0,559.4 978.0,559.4" fill="none" stroke="#1f69b4" stroke-width="2"/>
<text x="874.5" y="571" text-anchor="middle" font-family="Liberation Sans" font-size="11.2" fill="#444" dy="0.7">Processes</text></svg>

</body></html>
